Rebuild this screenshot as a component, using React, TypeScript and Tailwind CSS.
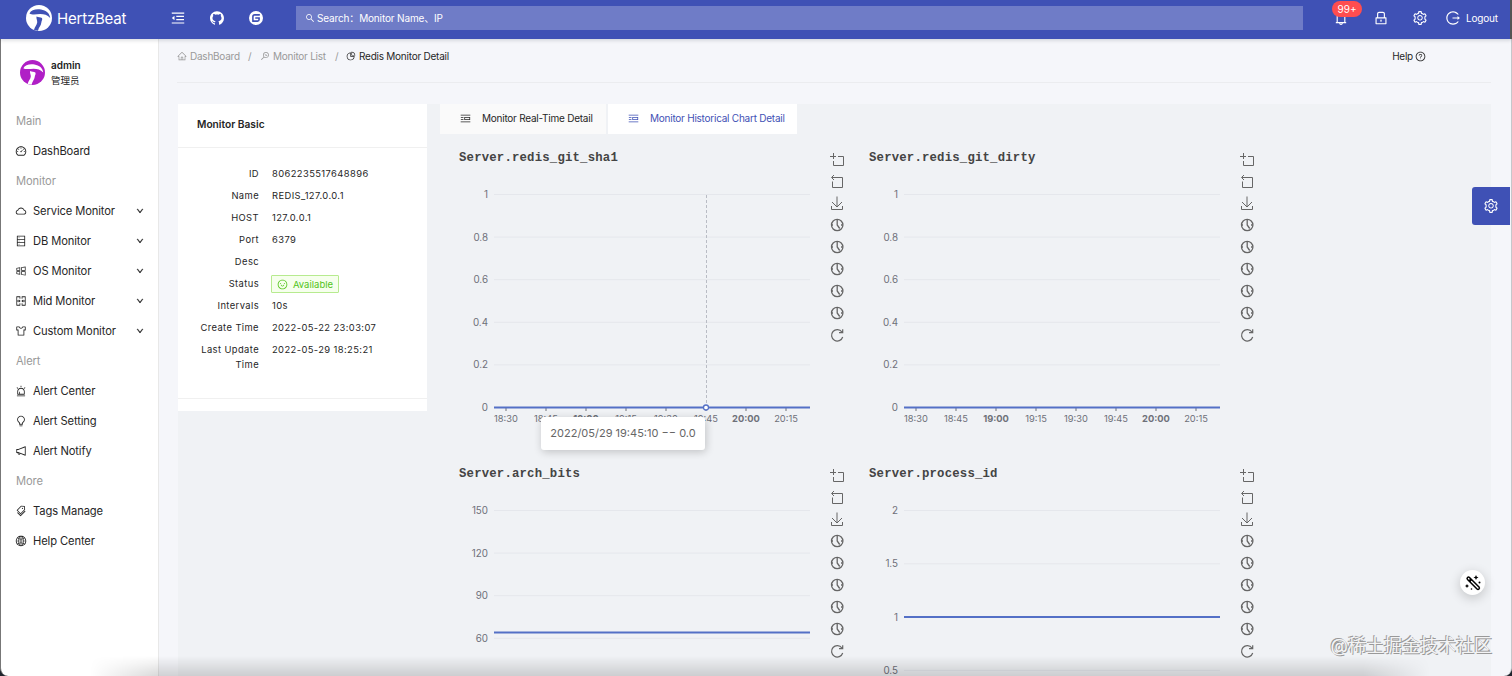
import {
  AiFillGithub,
  AiOutlineAlert,
  AiOutlineBell,
  AiOutlineBulb,
  AiOutlineCloud,
  AiOutlineDashboard,
  AiOutlineDatabase,
  AiOutlineDown,
  AiOutlineGlobal,
  AiOutlineHome,
  AiOutlineLock,
  AiOutlineLogout,
  AiOutlineMenuFold,
  AiOutlineMergeCells,
  AiOutlineMonitor,
  AiOutlineNotification,
  AiOutlinePicRight,
  AiOutlinePieChart,
  AiOutlineQuestionCircle,
  AiOutlineSearch,
  AiOutlineSetting,
  AiOutlineSkin,
  AiOutlineSmile,
  AiOutlineTags,
  AiOutlineWindows,
} from 'react-icons/ai';
import { SiGitee } from 'react-icons/si';
import type { IconType } from 'react-icons';

type MenuItem = { label: string; icon: IconType; expandable?: boolean };

const MENU: { title: string; items: MenuItem[] }[] = [
  { title: 'Main', items: [{ label: 'DashBoard', icon: AiOutlineDashboard }] },
  {
    title: 'Monitor',
    items: [
      { label: 'Service Monitor', icon: AiOutlineCloud, expandable: true },
      { label: 'DB Monitor', icon: AiOutlineDatabase, expandable: true },
      { label: 'OS Monitor', icon: AiOutlineWindows, expandable: true },
      { label: 'Mid Monitor', icon: AiOutlineMergeCells, expandable: true },
      { label: 'Custom Monitor', icon: AiOutlineSkin, expandable: true },
    ],
  },
  {
    title: 'Alert',
    items: [
      { label: 'Alert Center', icon: AiOutlineAlert },
      { label: 'Alert Setting', icon: AiOutlineBulb },
      { label: 'Alert Notify', icon: AiOutlineNotification },
    ],
  },
  {
    title: 'More',
    items: [
      { label: 'Tags Manage', icon: AiOutlineTags },
      { label: 'Help Center', icon: AiOutlineGlobal },
    ],
  },
];

const BASICS = [
  ['ID', '8062235517648896'],
  ['Name', 'REDIS_127.0.0.1'],
  ['HOST', '127.0.0.1'],
  ['Port', '6379'],
  ['Desc', ''],
  ['Status', 'Available'],
  ['Intervals', '10s'],
  ['Create Time', '2022-05-22 23:03:07'],
  ['Last Update Time', '2022-05-29 18:25:21'],
];

const TIMES = ['18:30', '18:45', '19:00', '19:15', '19:30', '19:45', '20:00', '20:15'];

type ChartProps = {
  title: string;
  ticks: string[];
  times?: string[];
  step: number;
  lineY: number;
  pointer?: boolean;
};

function Logo({ className, cut }: { className: string; cut: string }) {
  return (
    <svg viewBox="0 0 26 26" className={className}>
      <circle cx="13" cy="13" r="13" fill="currentColor" />
      <g className={cut}>
        <path d="M3.5 8.500C5 5 10 3.800 15 4.600c5 .8 8.700 3.600 9.200 8.400-3-3-6-3.900-10-3.900-4 .2-8.500.9-10.700-.6z" />
        <path d="M10.500 11.500c2 1 3.800.5 5.500 1.500.8 1.700-.6 2.800-.7 4.800-.2 2.700-2.500 4.400-3.300 8l-4-.8c.5-3 2.700-4.500 3.200-7.500.3-2-1.200-4-.7-6z" />
      </g>
    </svg>
  );
}

function Header() {
  return (
    <header className="relative z-10 flex h-[39px] shrink-0 items-center border-r-2 border-r-[#555] bg-[#3f51b5] pb-[3px] text-white shadow-[0_1px_4px_rgba(0,21,41,0.18)]">
      <div className="flex w-[170px] items-center pl-[26px]">
        <Logo className="size-[26px] shrink-0" cut="fill-[#3f51b5]" />
        <span className="ml-[5px] text-[15px] leading-none tracking-[-0.2px]">HertzBeat</span>
      </div>
      <div className="flex w-[126px] items-center gap-[23px]">
        <AiOutlineMenuFold className="size-4" />
        <AiFillGithub className="size-4" />
        <SiGitee className="ml-px size-[14px]" />
      </div>
      <div className="flex h-6 w-[1007px] items-center bg-white/25 pl-[9px] text-[10px] tracking-[-0.15px]">
        <AiOutlineSearch className="mr-[2px] size-[10px]" />
        Search：Monitor Name、IP
      </div>
      <div className="ml-[30px] flex items-center">
        <div className="relative">
          <AiOutlineBell className="size-4" />
          <span className="absolute -top-[9px] -left-[1px] flex h-[16px] w-[30px] items-center justify-center rounded-full bg-[#ff4d4f] text-[10px]">
            99+
          </span>
        </div>
        <AiOutlineLock className="ml-[24px] size-4" />
        <AiOutlineSetting className="ml-[23px] size-4" />
        <AiOutlineLogout className="ml-[17px] size-4" />
        <span className="ml-[5px] text-[10px] tracking-[-0.2px]">Logout</span>
      </div>
    </header>
  );
}

function Sidebar() {
  return (
    <aside className="w-[159px] shrink-0 rounded-bl-lg border-r border-l border-r-[#e8e8e8] border-l-[#777] bg-white">
      <div className="flex h-[67px] items-center pl-[19px]">
        <Logo className="size-[25px] text-[#b01fc6]" cut="fill-white" />
        <div className="ml-[6px] text-[10px] leading-[15px] text-[#222]">
          <div className="font-semibold">admin</div>
          <div className="text-[9.5px]">管理员</div>
        </div>
      </div>
      <nav className="text-[11.2px] tracking-[-0.12px]">
        {MENU.map((group) => (
          <div key={group.title}>
            <div className="flex h-[30px] items-center pl-[15px] text-[#999]">{group.title}</div>
            {group.items.map(({ label, icon: Icon, expandable }) => (
              <div key={label} className="flex h-[30px] items-center pr-[14px] pl-[14px] text-[#262626]">
                <Icon className="mr-[6px] size-3" />
                {label}
                {expandable && <AiOutlineDown className="ml-auto size-2 stroke-[60px]" />}
              </div>
            ))}
          </div>
        ))}
      </nav>
    </aside>
  );
}

function Breadcrumb() {
  return (
    <div className="mr-5 ml-[18px] flex h-[44px] items-start border-b border-[#ebecef] pt-[10px] text-[10px] leading-[14px] tracking-[-0.24px] text-[#999]">
      <span className="flex w-[71px] items-center gap-[3px]">
        <AiOutlineHome className="size-[10px]" />
        DashBoard
      </span>
      <span className="w-[12px]">/</span>
      <span className="flex w-[75px] items-center gap-[3px]">
        <AiOutlineMonitor className="size-[10px]" />
        Monitor List
      </span>
      <span className="w-[11px]">/</span>
      <span className="flex items-center gap-[3px] text-[#262626]">
        <AiOutlinePieChart className="size-[10px]" />
        Redis Monitor Detail
      </span>
      <span className="mr-[65px] ml-auto flex items-center gap-[2px] text-[#262626]">
        Help
        <AiOutlineQuestionCircle className="size-[11px]" />
      </span>
    </div>
  );
}

function MonitorBasic() {
  return (
    <section className="h-[307px] w-[249px] shrink-0 bg-white text-[#262626]">
      <h2 className="flex h-11 items-center border-b border-[#f0f0f0] pb-[2px] pl-[19px] text-[10.2px] font-semibold">
        Monitor Basic
      </h2>
      <dl className="flex h-[251px] flex-col border-b border-[#f0f0f0] pt-[18px] text-[9.4px] leading-[15px] tracking-[0.4px]">
        {BASICS.map(([name, value]) => (
          <div key={name} className="flex min-h-[22px] shrink-0">
            <dt className="w-[81px] pl-4 text-right">{name}</dt>
            <dd className="ml-[13px] whitespace-nowrap">
              {name === 'Status' ? (
                <span className="-mt-px -ml-px flex h-[18px] w-[68px] items-center justify-center gap-[5px] rounded-[1px] border border-[#b7eb8f] bg-[#f6ffed] text-[9.5px] tracking-normal text-[#52c41a]">
                  <AiOutlineSmile className="size-[11px]" />
                  {value}
                </span>
              ) : (
                value
              )}
            </dd>
          </div>
        ))}
      </dl>
    </section>
  );
}

function Toolbox() {
  return (
    <svg viewBox="0 0 14 194" className="h-[194px] w-[14px] fill-none stroke-[#666]">
      <path d="M0 3.5h6M3.5 0v6M8 3.5h5.500v9h-10V8" />
      <path d="M4 22 1.500 24.500 4 27M2 24.500h10.500v10H2.500v-6" />
      <path d="m2 49 5 5 5-5M7 43.500V54M1.500 53v3.500h11V53" />
      {[72, 94, 116, 138, 160].map((y) => (
        <g key={y} strokeWidth="1.3">
          <circle cx="7.2" cy={y} r="5.7" />
          <path d={`M7.2 ${y - 5.5}V${y}l2.500 3.500M1.500 ${y}h1.500M11 ${y}h1.500`} />
        </g>
      ))}
      <path strokeWidth="1.2" d="M11.900 179a5.700 5.700 0 1 0 .8 5M12.700 176.300v3.400H9" />
    </svg>
  );
}

function Chart({ title, ticks, times = [], step, lineY, pointer }: ChartProps) {
  return (
    <div className="relative flex h-[315.5px] w-[410px] shrink-0">
      <div className="w-[360px]">
        <h3 className="pt-px pl-px font-['Liberation_Mono',monospace] text-[12.3px] leading-[15px] font-bold tracking-[0.19px] text-[#444]">
          {title}
        </h3>
        <svg className="-mt-px h-[260px] w-[360px] overflow-visible" viewBox="0 0 360 260">
          {ticks.map((tick, i) => (
            <g key={tick}>
              <path d={`M36 ${29.5 + i * step}H352`} stroke="#e5e7ec" />
              <text x="30" y={33 + i * step} textAnchor="end" fontSize="9.8" fill="#6e7079">
                {tick}
              </text>
            </g>
          ))}
          {times.map((time, i) => (
            <g key={time}>
              <path d={`M${48 + i * 40} 242v4`} stroke="#6e7079" />
              <text
                x={48 + i * 40}
                y="257"
                textAnchor="middle"
                fontSize="9.3"
                fontWeight={time.endsWith(':00') ? 700 : 400}
                fill="#6e7079"
              >
                {time}
              </text>
            </g>
          ))}
          {pointer && <path d="M248.5 30v212" stroke="#b9bcc4" strokeDasharray="3 2" />}
          <path d={`M36 ${lineY}H352`} stroke="#5470c6" strokeWidth="1.8" />
          {pointer && <circle cx="248" cy={lineY} r="2.5" fill="white" stroke="#5470c6" strokeWidth="1.3" />}
        </svg>
        {pointer && (
          <div className="absolute top-[267px] left-[83px] flex h-[33px] w-[164px] items-center justify-center rounded-[3px] bg-white text-[11px] whitespace-nowrap text-[#666] shadow-[1px_2px_8px_rgba(0,0,0,0.2)]">
            2022/05/29 19:45:10 −− 0.0
          </div>
        )}
      </div>
      <div className="pt-[3px] pl-[12px]">
        <Toolbox />
      </div>
    </div>
  );
}

function Watermark() {
  return (
    <div className="absolute right-[20px] bottom-[16px] text-[18px] leading-[28px] whitespace-nowrap text-[#f4f4f5] [text-shadow:-1px_-1px_0_#999,1px_1px_0_#999]">
      @稀土掘金技术社区
    </div>
  );
}

function MagicButton() {
  return (
    <div className="absolute top-[570px] right-[27px] flex size-[25px] items-center justify-center rounded-full bg-white shadow-[0_3px_12px_rgba(0,0,0,0.2)]">
      <svg viewBox="0 0 16 16" className="size-4">
        <path d="M3.500 3.500 13 13" stroke="black" strokeWidth="4.2" strokeLinecap="round" />
        <path d="M6.500 6.500 13 13M3.500 3.500l.5.5" stroke="white" strokeWidth="1.3" strokeLinecap="round" />
        <path d="m11 0 .8 1.700 1.700.8-1.700.8L11 5l-.8-1.700-1.700-.8 1.700-.8zM2 9l.7 1.300 1.300.7-1.300.7L2 13l-.7-1.300L0 11l1.300-.7z" />
        <circle cx="14.5" cy="7.5" r="1" />
        <circle cx="6.5" cy="14" r=".8" />
      </svg>
    </div>
  );
}

export default function App() {
  return (
    <div className="relative flex h-[676px] w-[1512px] flex-col overflow-hidden bg-[#f5f7fa] font-['Inter','Noto_Sans_CJK_SC',sans-serif]">
      <Header />
      <div className="flex min-h-0 flex-1 bg-[#20252d]">
        <Sidebar />
        <main className="min-w-0 flex-1 overflow-hidden rounded-br-lg border-r border-[#c5c7cb] bg-[#f5f6fa]">
          <Breadcrumb />
          <div className="mt-[21px] mr-5 ml-[19px] flex h-[580px] bg-[#f0f2f5]">
            <MonitorBasic />
            <div className="ml-[13px] min-w-0 flex-1">
              <div className="flex h-[30px] gap-[2px] text-[10px] tracking-[-0.24px]">
                <div className="flex w-[166px] items-center bg-[#fafafa] pb-px pl-5 text-[#262626]">
                  <AiOutlinePicRight className="mr-[11px] size-[11px]" />
                  Monitor Real-Time Detail
                </div>
                <div className="flex w-[189px] items-center bg-white pb-px pl-5 text-[#3f51b5]">
                  <AiOutlinePicRight className="mr-[11px] size-[11px]" />
                  Monitor Historical Chart Detail
                </div>
              </div>
              <div className="flex flex-wrap pt-[16px] pl-[18px]">
                <Chart title="Server.redis_git_sha1" ticks={['1', '0.8', '0.6', '0.4', '0.2', '0']} times={TIMES} step={42.6} lineY={242.5} pointer />
                <Chart title="Server.redis_git_dirty" ticks={['1', '0.8', '0.6', '0.4', '0.2', '0']} times={TIMES} step={42.6} lineY={242.5} />
                <Chart title="Server.arch_bits" ticks={['150', '120', '90', '60']} step={42.6} lineY={151.5} />
                <Chart title="Server.process_id" ticks={['2', '1.5', '1', '0.5']} step={53.3} lineY={136} />
              </div>
            </div>
          </div>
        </main>
      </div>
      <div className="absolute top-[187px] right-[2px] flex h-[38px] w-[38px] items-center justify-center rounded-l-[3px] bg-[#3f51b5] text-white">
        <AiOutlineSetting className="size-4" />
      </div>
      <MagicButton />
      <div className="pointer-events-none absolute bottom-0 left-[90px] h-[20px] w-[1340px] bg-linear-to-t from-black/15 to-transparent [mask-image:linear-gradient(to_right,transparent,black_5%,black_95%,transparent)]" />
      <Watermark />
    </div>
  );
}
